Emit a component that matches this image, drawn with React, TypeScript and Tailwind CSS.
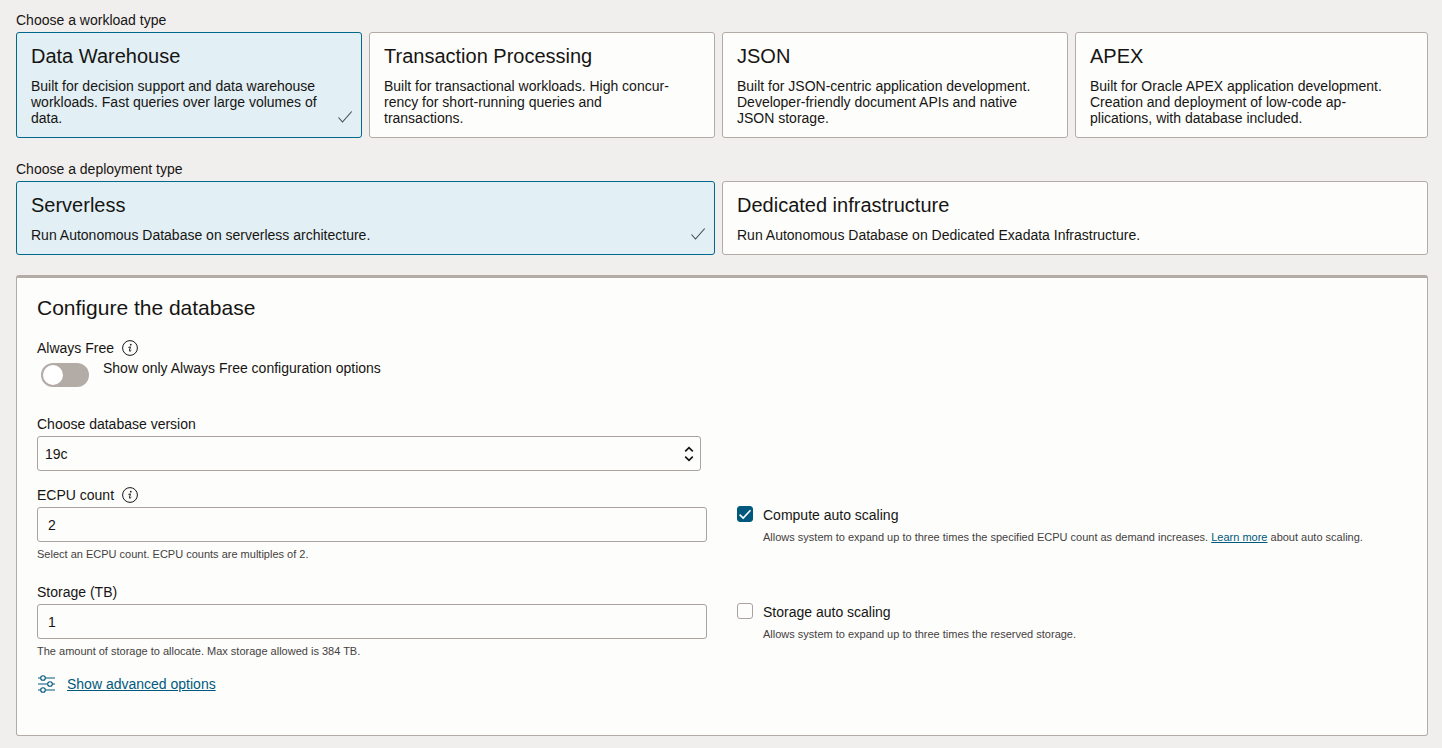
import { useState, type ReactNode } from "react";

type Option = { value: string; title: string; description: string };

const workloads: Option[] = [
  {
    value: "dw",
    title: "Data Warehouse",
    description:
      "Built for decision support and data warehouse workloads. Fast queries over large volumes of data.",
  },
  {
    value: "atp",
    title: "Transaction Processing",
    description:
      "Built for transactional workloads. High concur\u00ADrency for short-running queries and transactions.",
  },
  {
    value: "json",
    title: "JSON",
    description:
      "Built for JSON-centric application development. Developer-friendly document APIs and native JSON storage.",
  },
  {
    value: "apex",
    title: "APEX",
    description:
      "Built for Oracle APEX application development. Creation and deployment of low-code ap\u00ADplications, with database included.",
  },
];

const deployments: Option[] = [
  {
    value: "serverless",
    title: "Serverless",
    description: "Run Autonomous Database on serverless architecture.",
  },
  {
    value: "dedicated",
    title: "Dedicated infrastructure",
    description: "Run Autonomous Database on Dedicated Exadata Infrastructure.",
  },
];

function CheckMark() {
  return (
    <svg
      className="absolute right-2 bottom-3 h-4 w-4"
      viewBox="0 0 16 16"
      fill="none"
      stroke="#3f4a4d"
      strokeWidth="1.1"
      aria-hidden="true"
    >
      <path d="M1.5 8.5 L5.5 13 L14.7 2.5" />
    </svg>
  );
}

function InfoButton({ label }: { label: string }) {
  return (
    <button type="button" aria-label={label} className="h-4 w-4">
      <svg viewBox="0 0 16 16" className="h-4 w-4" fill="none" aria-hidden="true">
        <circle cx="8" cy="8" r="7.4" stroke="#161513" strokeWidth="1" />
        <circle cx="8.8" cy="4.7" r="0.85" fill="#161513" />
        <path
          d="M6.4 7.4 L8.4 6.9 L7.5 10.3 Q7.3 11.5 8.1 11.2 L9.3 10.2"
          stroke="#161513"
          strokeWidth="1"
        />
      </svg>
    </button>
  );
}

function OptionCard({
  option,
  name,
  checked,
  onSelect,
}: {
  option: Option;
  name: string;
  checked: boolean;
  onSelect: () => void;
}) {
  return (
    <label
      className={`relative mr-[7px] block cursor-pointer rounded-[3px] border pt-[11px] pr-8 pb-[11px] pl-[14px] last:mr-0 ${
        checked ? "border-[#00688c] bg-[#e2eff4]" : "border-[#b3aba6] bg-[#fdfdfb]"
      }`}
    >
      <input
        type="radio"
        name={name}
        value={option.value}
        checked={checked}
        onChange={onSelect}
        className="sr-only"
      />
      <span className="block text-xl leading-6">{option.title}</span>
      <span className="mt-[10px] block leading-4">{option.description}</span>
      {checked && <CheckMark />}
    </label>
  );
}

function ScalingOption({
  id,
  label,
  defaultChecked,
  children,
}: {
  id: string;
  label: string;
  defaultChecked: boolean;
  children: ReactNode;
}) {
  return (
    <div className="flex gap-[10px] pt-[19px]">
      <span className="relative block h-4 w-4 shrink-0">
        <input
          id={id}
          type="checkbox"
          defaultChecked={defaultChecked}
          className="peer block h-4 w-4 appearance-none rounded-[3px] border border-[#aaa39e] bg-[#fdfdfb] checked:border-[#00597d] checked:bg-[#00597d]"
        />
        <svg
          viewBox="0 0 16 16"
          fill="none"
          stroke="white"
          strokeWidth="1.6"
          className="pointer-events-none absolute inset-0 hidden h-4 w-4 peer-checked:block"
          aria-hidden="true"
        >
          <path d="M2.6 8.6 L6.2 12 L13.5 4.2" />
        </svg>
      </span>
      <div>
        <label htmlFor={id} className="block leading-[18px]">
          {label}
        </label>
        <p className="mt-[6px] text-[11px] leading-[14px] text-[#44413f]">{children}</p>
      </div>
    </div>
  );
}

export default function App() {
  const [workload, setWorkload] = useState("dw");
  const [deployment, setDeployment] = useState("serverless");

  return (
    <main className="min-h-screen bg-[#f1efed] pt-3 pr-[14px] pb-3 pl-4 font-['Liberation_Sans',Arial,sans-serif] text-sm text-[#161513]">
      <fieldset>
        <legend className="pb-1 leading-4">Choose a workload type</legend>
        <div className="grid grid-cols-4">
          {workloads.map((o) => (
            <OptionCard
              key={o.value}
              option={o}
              name="workload"
              checked={workload === o.value}
              onSelect={() => setWorkload(o.value)}
            />
          ))}
        </div>
      </fieldset>

      <fieldset className="mt-[23px]">
        <legend className="pb-1 leading-4">Choose a deployment type</legend>
        <div className="grid grid-cols-2">
          {deployments.map((o) => (
            <OptionCard
              key={o.value}
              option={o}
              name="deployment"
              checked={deployment === o.value}
              onSelect={() => setDeployment(o.value)}
            />
          ))}
        </div>
      </fieldset>

      <section className="mt-5 rounded-[3px] border border-t-3 border-[#b3aba6] bg-[#fdfdfb] px-5 pt-4 pb-[37px]">
        <h2 className="text-[21px] leading-7">Configure the database</h2>

        <div className="mt-[18px] flex items-center gap-2 leading-4">
          <span id="always-free">Always Free</span>
          <InfoButton label="About Always Free" />
        </div>
        <div className="mt-1 flex gap-[14px] pl-1">
          <input
            id="free-only"
            type="checkbox"
            role="switch"
            className="mt-[3px] h-6 w-12 shrink-0 appearance-none rounded-full bg-[#b3aba6] p-[2px] before:block before:h-5 before:w-5 before:rounded-full before:bg-white checked:bg-[#00597d] checked:before:ml-6"
          />
          <label htmlFor="free-only" className="leading-4">
            Show only Always Free configuration options
          </label>
        </div>

        <div className="mt-[29px] grid grid-cols-2 gap-x-[30px]">
          <div className="pr-[6px]">
            <label htmlFor="version" className="block leading-4">
              Choose database version
            </label>
            <div className="relative mt-1">
              <select
                id="version"
                className="block h-[35px] w-full appearance-none rounded-[3px] border border-[#aaa39e] bg-[#fdfdfb] px-[7px]"
              >
                <option>19c</option>
              </select>
              <svg
                viewBox="0 0 10 16"
                className="pointer-events-none absolute top-[10px] right-[7px] h-4 w-[10px]"
                fill="none"
                stroke="#161513"
                strokeWidth="1.7"
                aria-hidden="true"
              >
                <path d="M1.2 5.3 L5 1.6 L8.8 5.3 M1.2 10.7 L5 14.4 L8.8 10.7" />
              </svg>
            </div>
          </div>
        </div>

        <div className="mt-4 grid grid-cols-2 gap-x-[30px]">
          <div>
            <div className="flex items-center gap-2 leading-4">
              <label htmlFor="ecpu">ECPU count</label>
              <InfoButton label="About ECPU count" />
            </div>
            <input
              id="ecpu"
              type="text"
              defaultValue="2"
              className="mt-1 block h-[35px] w-full rounded-[3px] border border-[#aaa39e] bg-[#fdfdfb] px-[10px]"
            />
            <p className="mt-[5px] text-[11px] leading-[14px] text-[#44413f]">
              Select an ECPU count. ECPU counts are multiples of 2.
            </p>
          </div>
          <ScalingOption id="compute-scaling" label="Compute auto scaling" defaultChecked>
            Allows system to expand up to three times the specified ECPU count as demand increases.{" "}
            <a href="#learn-more" className="text-[#00597d] underline">
              Learn more
            </a>{" "}
            about auto scaling.
          </ScalingOption>
        </div>

        <div className="mt-[23px] grid grid-cols-2 gap-x-[30px]">
          <div>
            <label htmlFor="storage" className="block leading-4">
              Storage (TB)
            </label>
            <input
              id="storage"
              type="text"
              defaultValue="1"
              className="mt-1 block h-[35px] w-full rounded-[3px] border border-[#aaa39e] bg-[#fdfdfb] px-[10px]"
            />
            <p className="mt-[5px] text-[11px] leading-[14px] text-[#44413f]">
              The amount of storage to allocate. Max storage allowed is 384 TB.
            </p>
          </div>
          <ScalingOption id="storage-scaling" label="Storage auto scaling" defaultChecked={false}>
            Allows system to expand up to three times the reserved storage.
          </ScalingOption>
        </div>

        <a
          href="#advanced"
          className="mt-[17px] inline-flex items-center gap-3 leading-[18px] text-[#00597d]"
        >
          <svg
            viewBox="0 0 18 18"
            className="h-[18px] w-[18px]"
            fill="none"
            stroke="#00597d"
            strokeWidth="1.1"
            aria-hidden="true"
          >
            <circle cx="6" cy="3" r="2.3" />
            <circle cx="13" cy="9" r="2.3" />
            <circle cx="6" cy="15" r="2.3" />
            <path d="M1 3h2.7M8.3 3H18M1 9h9.7M15.3 9H18M1 15h2.7M8.3 15H18" />
          </svg>
          <span className="underline">Show advanced options</span>
        </a>
      </section>
    </main>
  );
}
